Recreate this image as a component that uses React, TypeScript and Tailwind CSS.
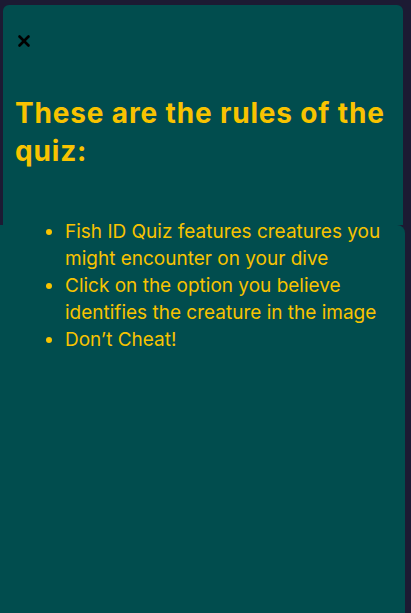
import { X } from 'lucide-react';

const rules = [
  'Fish ID Quiz features creatures you might encounter on your dive',
  'Click on the option you believe identifies the creature in the image',
  "Don’t Cheat!",
];

const App = () => {
  return (
    <div
      className="min-h-screen w-full bg-[#1c1a33] flex flex-col text-[#f8c300]"
      style={{ fontFamily: 'Inter, "Noto Sans", sans-serif' }}
    >
      <div className="ml-[3px] mt-[5px] w-[400px] h-[220px] rounded-t-md bg-[#014d4e] px-3 pt-[27px]">
        <button className="text-black">
          <X size={18} strokeWidth={3.5} />
        </button>
        <h1 className="mt-[38px] text-[28px] leading-[38px] font-bold tracking-[0.03em]">
          These are the rules of the quiz:
        </h1>
      </div>
      <div className="w-[405px] flex-1 bg-[#014d4e] rounded-tr-lg">
        <ul className="-mt-[7px] list-disc pl-[65px] pr-3 text-[19px] leading-[27px] marker:text-[#f8c300]">
          {rules.map((rule) => (
            <li key={rule}>{rule}</li>
          ))}
        </ul>
      </div>
    </div>
  );
};

export default App;
